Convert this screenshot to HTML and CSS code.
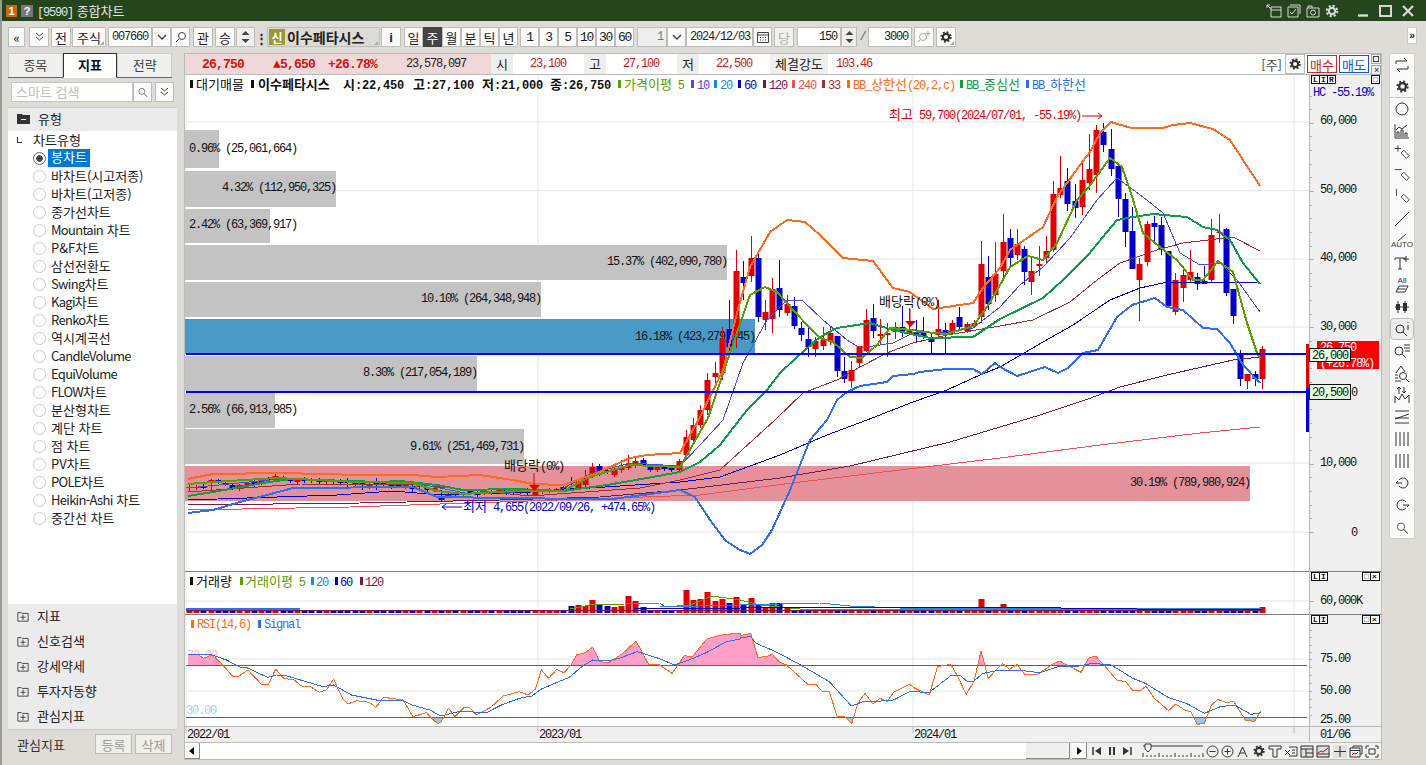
FILE: index.html
```html
<!DOCTYPE html>
<html lang="ko">
<head>
  <meta charset="UTF-8" />
  <title>[9590] 종합차트</title>
  <link rel="stylesheet" href="styles.css">
</head>
<body>
  <!-- shared icons -->
  <svg class="defs" width="0" height="0">
    <symbol id="i-gear" viewBox="0 0 20 20">
      <circle cx="10" cy="10" r="4.5" fill="none" stroke="#333" stroke-width="3"/>
      <circle cx="10" cy="10" r="6.8" fill="none" stroke="#333" stroke-width="2.6" stroke-dasharray="2.7 2.64"/>
    </symbol>
    <symbol id="i-zoom" viewBox="0 0 20 20">
      <circle cx="8" cy="9" r="5" fill="none" stroke="#333"/>
      <path d="M12 13l5 5" stroke="#333" stroke-width="1.4"/>
    </symbol>
    <symbol id="i-pencil" viewBox="0 0 20 20">
      <path d="M9 10l3-3 6 6-3 3z" fill="none" stroke="#333"/>
    </symbol>
    <symbol id="i-plus-box" viewBox="0 0 14 14">
      <path d="M1 3h4l1 1h7v9H1z" fill="none" stroke="#333"/>
      <path d="M7 5.500v6M4 8.500h6" stroke="#333"/>
    </symbol>
  </svg>

  <div class="titlebar">
    <span class="badge badge-one">1</span>
    <span class="badge badge-help">?</span>
    <span class="title-text"><span class="num">[9590]</span> 종합차트</span>
    <div class="title-icons">
      <svg width="16" height="14" viewBox="0 0 16 14"><path d="M5 3h10v10H5zM5 6h10M1 1l4 4M1 1h3M1 1v3" fill="none" stroke="#d8d8d8"/></svg>
      <svg width="14" height="14" viewBox="0 0 14 14"><path d="M3 1h10v9M1 3h10v10H1zM3 8l2 2 4-5" fill="none" stroke="#d8d8d8"/></svg>
      <svg width="14" height="14" viewBox="0 0 14 14"><path d="M1 4h12v9H1zM2 4V2h4v2" fill="none" stroke="#d8d8d8"/><circle cx="7" cy="8.500" r="2.500" fill="none" stroke="#d8d8d8"/></svg>
      <svg width="14" height="14" viewBox="0 0 20 20"><circle cx="10" cy="10" r="4.500" fill="none" stroke="#d8d8d8" stroke-width="3"/><circle cx="10" cy="10" r="7.500" fill="none" stroke="#d8d8d8" stroke-width="3" stroke-dasharray="3 2.900"/></svg>
    </div>
    <div class="win-btns">
      <svg width="12" height="12" viewBox="0 0 12 12"><path d="M1 10.500h10" stroke="#d8d8d8" stroke-width="2.400"/></svg>
      <svg width="13" height="12" viewBox="0 0 13 12"><path d="M1 1h11v10H1z" fill="none" stroke="#d8d8d8" stroke-width="2"/></svg>
      <svg width="12" height="12" viewBox="0 0 12 12"><path d="M1 1l10 10M11 1L1 11" stroke="#d8d8d8" stroke-width="2.200"/></svg>
    </div>
  </div>

  <div class="toolbar">
    <div class="btn w17">«</div>
    <div class="btn w20 ml4"><svg width="9" height="10" viewBox="0 0 9 10"><path d="M1 1l3.500 3L8 1M1 5l3.500 3L8 5" fill="none" stroke="#444"/></svg></div>
    <div class="btn w20 ml2">전</div>
    <div class="btn w34 ml1 corner">주식</div>
    <div class="field w44 ml2 num">007660</div>
    <div class="btn w19"><svg width="10" height="7" viewBox="0 0 10 7"><path d="M1 1l4 4 4-4" fill="none" stroke="#444" stroke-width="1.500"/></svg></div>
    <div class="btn w19"><svg width="12" height="12" viewBox="0 0 12 12"><circle cx="7" cy="5" r="3.500" fill="none" stroke="#444"/><path d="M4.500 7.500L1 11" stroke="#444"/></svg></div>
    <div class="btn w20 ml3">관</div>
    <div class="btn w20 ml2">승</div>
    <div class="btn w19 ml1 spin"><svg width="11" height="16" viewBox="0 0 11 16"><path d="M5.500 2l4 4h-8zM1.500 10h8l-4 4z" fill="#444"/></svg></div>
    <div class="dots ml2">⋮</div>
    <div class="combo ml2 corner"><span class="sin-mark">신</span><span class="combo-name">이수페타시스</span></div>
    <div class="btn w20 ml1 strong">i</div>
    <div class="period ml3">
      <div class="btn w19">일</div><div class="btn w19 active">주</div><div class="btn w19">월</div><div class="btn w19">분</div><div class="btn w19">틱</div><div class="btn w19">년</div>
    </div>
    <div class="period ml2 num">
      <div class="btn w19">1</div><div class="btn w19">3</div><div class="btn w19">5</div><div class="btn w19">10</div><div class="btn w19">30</div><div class="btn w19">60</div>
    </div>
    <div class="field w30 ml3 right off num">1</div>
    <div class="btn w19"><svg width="10" height="7" viewBox="0 0 10 7"><path d="M1 1l4 4 4-4" fill="none" stroke="#444" stroke-width="1.500"/></svg></div>
    <div class="field w67 num">2024/12/03</div>
    <div class="btn w19"><svg width="12" height="12" viewBox="0 0 12 12"><path d="M.5 1.500h11v10H.5zM.5 4h11M3 6.500h1M5.500 6.500h1M8 6.500h1M3 9h1M5.500 9h1M8 9h1" fill="none" stroke="#444"/></svg></div>
    <div class="btn w20 ml2 off-text">당</div>
    <div class="field w44 ml3 right num">150</div>
    <div class="btn w16 spin"><svg width="11" height="16" viewBox="0 0 11 16"><path d="M5.500 2l4 4h-8zM1.500 10h8l-4 4z" fill="#444"/></svg></div>
    <div class="slash num">/</div>
    <div class="field w44 right num">3000</div>
    <div class="btn w20 ml2"><svg width="15" height="14" viewBox="0 0 15 14"><circle cx="6" cy="7" r="3.500" fill="none" stroke="#aaa"/><path d="M3.500 9.500L1 12M11 1v5M8.500 3.500h5" stroke="#aaa"/></svg></div>
    <div class="btn w20 ml2 corner"><svg width="14" height="14"><use href="#i-gear"/></svg></div>
    <div class="more">»</div>
  </div>

  <div class="content">
    <!-- left panel -->
    <aside class="left-panel">
      <div class="tabs">
        <div class="tab">종목</div>
        <div class="tab tab-on">지표</div>
        <div class="tab">전략</div>
      </div>
      <div class="search-row">
        <input class="search-input" type="text" placeholder="스마트 검색"/>
        <div class="btn w19"><svg width="12" height="12"><use href="#i-zoom"/></svg></div>
        <div class="btn w19 ml3"><svg width="9" height="10" viewBox="0 0 9 10"><path d="M1 1l3.500 3L8 1M1 5l3.500 3L8 5" fill="none" stroke="#444"/></svg></div>
      </div>
      <div class="group-head group-open">
        <svg width="13" height="11" viewBox="0 0 13 11"><path d="M0 1h5l1 1h7v9H0z" fill="#333"/><path d="M4 6.500h5" stroke="#eee"/></svg>
        <span>유형</span>
      </div>
      <div class="tree">
        <div class="tree-root"><span class="elbow"></span>차트유형</div>
        <div class="tree-item"><span class="radio radio-on"></span><span class="sel">봉차트</span></div>
        <div class="tree-item"><span class="radio"></span><span>바차트(시고저종)</span></div>
        <div class="tree-item"><span class="radio"></span><span>바차트(고저종)</span></div>
        <div class="tree-item"><span class="radio"></span><span>종가선차트</span></div>
        <div class="tree-item"><span class="radio"></span><span><span class="lat">Mountain</span> 차트</span></div>
        <div class="tree-item"><span class="radio"></span><span>P&amp;F차트</span></div>
        <div class="tree-item"><span class="radio"></span><span>삼선전환도</span></div>
        <div class="tree-item"><span class="radio"></span><span><span class="lat">Swing</span>차트</span></div>
        <div class="tree-item"><span class="radio"></span><span><span class="lat">Kagi</span>차트</span></div>
        <div class="tree-item"><span class="radio"></span><span><span class="lat">Renko</span>차트</span></div>
        <div class="tree-item"><span class="radio"></span><span>역시계곡선</span></div>
        <div class="tree-item"><span class="radio"></span><span class="lat">CandleVolume</span></div>
        <div class="tree-item"><span class="radio"></span><span class="lat">EquiVolume</span></div>
        <div class="tree-item"><span class="radio"></span><span><span class="lat">FLOW</span>차트</span></div>
        <div class="tree-item"><span class="radio"></span><span>분산형차트</span></div>
        <div class="tree-item"><span class="radio"></span><span>계단 차트</span></div>
        <div class="tree-item"><span class="radio"></span><span>점 차트</span></div>
        <div class="tree-item"><span class="radio"></span><span>PV차트</span></div>
        <div class="tree-item"><span class="radio"></span><span><span class="lat">POLE</span>차트</span></div>
        <div class="tree-item"><span class="radio"></span><span><span class="lat">Heikin-Ashi</span> 차트</span></div>
        <div class="tree-item"><span class="radio"></span><span>중간선 차트</span></div>
      </div>
      <div class="groups">
        <div class="group-head"><svg width="12" height="12"><use href="#i-plus-box"/></svg><span>지표</span></div>
        <div class="group-head"><svg width="12" height="12"><use href="#i-plus-box"/></svg><span>신호검색</span></div>
        <div class="group-head"><svg width="12" height="12"><use href="#i-plus-box"/></svg><span>강세약세</span></div>
        <div class="group-head"><svg width="12" height="12"><use href="#i-plus-box"/></svg><span>투자자동향</span></div>
        <div class="group-head"><svg width="12" height="12"><use href="#i-plus-box"/></svg><span>관심지표</span></div>
      </div>
      <div class="panel-foot">
        <span class="foot-label">관심지표</span>
        <div class="foot-btn">등록</div>
        <div class="foot-btn">삭제</div>
      </div>
    </aside>

    <!-- chart frame -->
    <main class="chart-frame">
      <div class="quote-row">
        <div class="quote-now">
          <span class="q-price">26,750</span>
          <span class="q-up">▲5,650</span>
          <span class="q-up q-pct">+26.78%</span>
          <span class="q-vol">23,578,097</span>
        </div>
        <div class="q-label">시</div><div class="q-val w71">23,100</div>
        <div class="q-label">고</div><div class="q-val w71">27,100</div>
        <div class="q-label">저</div><div class="q-val w71">22,500</div>
        <div class="q-label w58">체결강도</div><div class="q-val q-last">103.46</div>
        <div class="q-tools">
          <span class="q-unit">[주]</span>
          <div class="btn w20"><svg width="14" height="14"><use href="#i-gear"/></svg></div>
          <div class="order order-buy">매수</div>
          <div class="order order-sell">매도</div>
          <div class="mini-col">
            <span class="mini"><i class="mini-sq"></i></span>
            <span class="mini">×</span>
          </div>
        </div>
      </div>
      <svg id="chart" class="chart" width="1196" height="667" viewBox="185 75 1196 667"></svg>
      <div class="scroll-row">
        <div class="scroll-arrow"><svg width="6" height="8" viewBox="0 0 6 8"><path d="M5 0v8L0 4z" fill="#111"/></svg></div>
        <div class="scroll-track"></div>
        <div class="scroll-thumb"></div>
        <div class="scroll-arrow ml2"><svg width="6" height="8" viewBox="0 0 6 8"><path d="M1 0v8l5-4z" fill="#111"/></svg></div>
        <div class="play-btns">
          <svg width="10" height="10" viewBox="0 0 10 10"><path d="M1 1v8" stroke="#333" stroke-width="1.500"/><path d="M9 1v8L3 5z" fill="#333"/></svg>
          <svg width="10" height="10" viewBox="0 0 10 10"><path d="M2 1h2v8H2zM6 1h2v8H6z" fill="#333"/></svg>
          <svg width="10" height="10" viewBox="0 0 10 10"><path d="M1 1v8l6-4z" fill="#333"/><path d="M9 1v8" stroke="#333" stroke-width="1.500"/></svg>
        </div>
        <svg class="slider" width="62" height="15" viewBox="0 0 62 15">
          <path d="M1 3h60M1 10v4M5 12v2M9 12v2M13 12v2M17 10v4M21 12v2M25 12v2M29 12v2M33 10v4M37 12v2M41 12v2M45 12v2M49 10v4M53 12v2M57 12v2M61 10v4" stroke="#333"/>
          <path d="M3 1h6v5l-3 3-3-3z" fill="#eee" stroke="#333"/>
        </svg>
        <div class="bottom-icons">
          <svg width="13" height="13" viewBox="0 0 13 13"><circle cx="6.500" cy="6.500" r="5.500" fill="none" stroke="#333"/><path d="M3.500 6.500h6" stroke="#333"/></svg>
          <svg width="13" height="13" viewBox="0 0 13 13"><circle cx="6.500" cy="6.500" r="5.500" fill="none" stroke="#333"/><path d="M3.500 6.500h6M6.500 3.500v6" stroke="#333"/></svg>
          <svg width="13" height="13" viewBox="0 0 13 13"><path d="M2 12L6.500 2 11 12M4 8h5" fill="none" stroke="#333"/></svg>
          <svg width="14" height="14"><use href="#i-gear"/></svg>
          <svg width="14" height="13" viewBox="0 0 14 13"><path d="M1 1h12v3H9v8H5V4H1z" fill="none" stroke="#333"/></svg>
          <svg width="14" height="13" viewBox="0 0 14 13"><path d="M5 2h8v9H5M1 5l5 5M6 5l-5 5M8 5h3M8 8h3" fill="none" stroke="#333"/></svg>
          <svg class="icon-on" width="14" height="13" viewBox="0 0 14 13"><path d="M1 1h12v11H1zM1 4h12M6 4v8M6 8h7" fill="none" stroke="#333"/></svg>
          <svg class="icon-on" width="14" height="13" viewBox="0 0 14 13"><path d="M1 1h12v11H1zM1 9h12" fill="none" stroke="#333"/><path d="M2 8l3-2 2 1 5-4" fill="none" stroke="#d00"/></svg>
          <svg class="icon-on" width="14" height="13" viewBox="0 0 14 13"><path d="M7 1v11M1 6.500h12" stroke="#333"/></svg>
          <svg width="14" height="13" viewBox="0 0 14 13"><path d="M4 3V1h9v8h-2M1 3h10v9H1zM1 5.500h10" fill="none" stroke="#333"/><path d="M3 10l2-2 2 1 2-2" fill="none" stroke="#d00"/></svg>
          <svg width="14" height="13" viewBox="0 0 14 13"><path d="M1 4V1h3M10 1h3v3M13 9v3h-3M4 12H1V9M4 4h6v5H4z" fill="none" stroke="#333"/></svg>
        </div>
      </div>
    </main>

    <!-- drawing tools -->
    <nav class="side-tools">
      <div class="tool"><svg width="18" height="16" viewBox="0 0 18 16"><path d="M3 7V4h11l-3-3M15 9v3H4l3 3" fill="none" stroke="#333"/></svg></div>
      <div class="tool tool-last"><svg width="15" height="15"><use href="#i-gear"/></svg></div>
      <div class="tool"><svg width="14" height="14" viewBox="0 0 14 14"><circle cx="7" cy="7" r="6" fill="none" stroke="#333"/></svg></div>
      <div class="tool"><svg width="16" height="16" viewBox="0 0 16 16"><path d="M1 1v14h14M3 14V9h2v5M7 14V7h2v7M11 14v-4h2v4M2 7l3-3 3 2 5-4" fill="none" stroke="#333"/></svg></div>
      <div class="tool"><svg width="18" height="18" viewBox="0 0 20 20"><path d="M2 5h7M5.500 1.500v7" stroke="#333"/><use href="#i-pencil"/></svg></div>
      <div class="tool"><svg width="18" height="18" viewBox="0 0 20 20"><path d="M2 4h8" stroke="#333"/><use href="#i-pencil"/></svg></div>
      <div class="tool"><svg width="18" height="18" viewBox="0 0 20 20"><path d="M4 1v8" stroke="#333"/><use href="#i-pencil"/></svg></div>
      <div class="tool"><svg width="16" height="16" viewBox="0 0 16 16"><path d="M1 15L15 1" stroke="#333"/></svg></div>
      <div class="tool tool-auto"><svg width="14" height="7" viewBox="0 0 14 7"><path d="M3 7l8-7" stroke="#333"/></svg><span>AUTO</span></div>
      <div class="tool"><svg width="18" height="16" viewBox="0 0 18 16"><path d="M2 5V3h10v2M7 3v11M5 14h4M13 1v6M10 4h6" fill="none" stroke="#333"/></svg></div>
      <div class="tool tool-auto"><span>All</span><svg width="14" height="8" viewBox="0 0 14 8"><path d="M4 1h9L10 7H1zM2.500 4h8" fill="none" stroke="#333"/></svg></div>
      <div class="tool"><svg width="14" height="14" viewBox="0 0 14 14"><path d="M3 1v12M10 1v12M0 7h14" stroke="#333"/><path d="M1 4h4v6H1zM8 3h4v8H8z" fill="#333"/></svg></div>
      <div class="tool tool-on"><svg width="18" height="16" viewBox="0 0 18 16"><circle cx="7" cy="8" r="4" fill="none" stroke="#333"/><path d="M10 11l4 4M15 1v1M15 4v5" stroke="#333"/></svg></div>
      <div class="tool"><svg width="18" height="16" viewBox="0 0 18 16"><circle cx="6" cy="8" r="4" fill="none" stroke="#333"/><path d="M9 11l4 4M11 2h6M11 5h6M12 8h5" stroke="#333"/></svg></div>
      <div class="tool"><svg width="18" height="18" viewBox="0 0 18 18"><circle cx="10" cy="12" r="3.500" fill="none" stroke="#333"/><path d="M13 15l3 3M3 9l5-7 4 6M2 11h3M2 14h3M2 17h6" fill="none" stroke="#333"/></svg></div>
      <div class="tool"><svg width="16" height="18" viewBox="0 0 16 18"><path d="M1 17V10l4 4 3-6 3 5 4-4v8M5 1v7M3 3l2-2 2 2M10 1v6M8 5l2 2 2-2" fill="none" stroke="#333"/></svg></div>
      <div class="tool"><svg width="16" height="14" viewBox="0 0 16 14"><path d="M1 1h14M1 13h14M1 9l14-5M1 8h14" fill="none" stroke="#333"/></svg></div>
      <div class="tool"><svg width="14" height="16" viewBox="0 0 14 16"><path d="M1 1v14M5 1v14M9 1v14M13 1v14" stroke="#333"/></svg></div>
      <div class="tool"><svg width="14" height="16" viewBox="0 0 14 16"><path d="M1 1v14M5 1v14M9 1v14M13 1v14" stroke="#333"/></svg></div>
      <div class="tool"><svg width="15" height="14" viewBox="0 0 15 14"><path d="M4 4a5 5 0 1 1 0 6M1 7h6M1 7l2-2" fill="none" stroke="#333"/></svg></div>
      <div class="tool"><svg width="15" height="14" viewBox="0 0 15 14"><path d="M11 4a5 5 0 1 0 0 6M8 7h6M14 7l-2 2" fill="none" stroke="#333"/></svg></div>
      <div class="tool"><svg width="15" height="15"><use href="#i-zoom"/></svg></div>
    </nav>
  </div>

  <script src="chart.js"></script>
</body>
</html>
```

FILE: styles.css
```css
body {
  font-family: "Noto Sans CJK KR", "Liberation Sans", sans-serif;
  font-size: 13px;
  color: #222;
  margin: 0;
  width: 1426px;
  height: 765px;
  overflow: hidden;
  background-color: #dddcd7;
  border-left: 2px solid #9a9a96;
  box-sizing: border-box;
}

.defs {
  position: absolute;
}

.num {
  font-family: "Liberation Mono", monospace;
  font-size: 12px;
  letter-spacing: -1.2px;
}

/* Title bar */
.titlebar {
  height: 21px;
  margin-left: -2px;
  padding-left: 6px;
  display: flex;
  align-items: center;
  background-color: #25451c;
  color: #e4e4e4;
}

.badge {
  width: 11px;
  height: 12px;
  margin-right: 4px;
  display: flex;
  align-items: center;
  justify-content: center;
  font: 700 11px "Liberation Sans", sans-serif;
  color: #fff;
}

.badge-one {
  background-color: #c8690f;
}

.badge-help {
  width: 12px;
  background-color: #777;
}

.title-text {
  font-size: 13px;
}

.title-icons {
  margin-left: auto;
  display: flex;
  align-items: center;
  gap: 5px;
}

.win-btns {
  margin-left: 18px;
  margin-right: 12px;
  display: flex;
  align-items: center;
  gap: 10px;
}

/* Toolbar */
.toolbar {
  height: 20px;
  padding: 6px 0 6px 6px;
  display: flex;
  align-items: stretch;
}

.btn {
  position: relative;
  box-sizing: border-box;
  height: 20px;
  flex: none;
  display: flex;
  align-items: center;
  justify-content: center;
  border: 1px solid #bcbcb8;
  background-color: #fbfbfb;
  font-size: 13px;
}

.field {
  box-sizing: border-box;
  height: 20px;
  padding: 0 3px;
  display: flex;
  align-items: center;
  flex: none;
  border: 1px solid #bcbcb8;
  background-color: #fff;
  font-size: 12px;
}

.right {
  justify-content: flex-end;
}

.off {
  background-color: #eee;
  color: #777;
}

.off-text {
  color: #aaa;
  background-color: #f2f2f0;
}

.w16 { width: 16px; }
.w17 { width: 17px; }
.w19 { width: 19px; }
.w20 { width: 20px; }
.w30 { width: 30px; }
.w34 { width: 34px; }
.w44 { width: 44px; }
.w67 { width: 67px; }

.ml1 { margin-left: 1px; }
.ml2 { margin-left: 2px; }
.ml3 { margin-left: 3px; }
.ml4 { margin-left: 4px; }

.corner::after {
  content: "";
  position: absolute;
  right: 1px;
  bottom: 1px;
  border: 2px solid transparent;
  border-right-color: #aaa;
  border-bottom-color: #aaa;
}

.spin {
  background-color: #efefef;
}

.strong {
  font: 700 13px "Liberation Sans", sans-serif;
}

.dots {
  width: 8px;
  display: flex;
  align-items: center;
  justify-content: center;
  font-weight: 700;
}

.combo {
  position: relative;
  width: 113px;
  display: flex;
  align-items: center;
  box-sizing: border-box;
  border: 1px solid #bcbcb8;
  background-color: #dcdbd5;
}

.sin-mark {
  width: 16px;
  height: 16px;
  margin-left: 1px;
  display: flex;
  align-items: center;
  justify-content: center;
  background-color: #9c9633;
  color: #fff;
  font-size: 12px;
  font-weight: 700;
}

.combo-name {
  margin-left: 2px;
  font-weight: 700;
  font-size: 14px;
  line-height: 18px;
}

.period {
  display: flex;
}

.period .num {
  font-size: 12px;
}

.active {
  background-color: #444;
  border-color: #444;
  color: #fff;
}

.slash {
  width: 11px;
  display: flex;
  align-items: center;
  justify-content: center;
  color: #666;
}

.more {
  margin-left: 451px;
  width: 8px;
  height: 15px;
  display: flex;
  align-items: center;
  justify-content: center;
  background-color: #fff;
  border: 1px solid #ccc;
  font: 700 10px "Liberation Sans", sans-serif;
}

/* Page body */
.content {
  display: flex;
  align-items: flex-start;
  padding-left: 6px;
}

/* Left panel */
.left-panel {
  width: 169px;
  height: 705px;
  flex: none;
  display: flex;
  flex-direction: column;
}

.tabs {
  height: 24px;
  display: flex;
  border-bottom: 1px solid #666;
  margin-right: 5px;
}

.tab {
  flex: 1;
  padding-bottom: 2px;
  display: flex;
  align-items: center;
  justify-content: center;
  background-color: #f0f0ee;
  border: 1px solid #ccc;
  border-bottom: none;
  color: #444;
}

.tab-on {
  background-color: #fff;
  border: 1px solid #333;
  border-bottom: 1px solid #fff;
  margin-bottom: -1px;
  color: #111;
  font-weight: 700;
}

.search-row {
  height: 25px;
  padding-left: 3px;
  padding-top: 4px;
  display: flex;
  align-items: flex-start;
}

.search-input {
  width: 122px;
  height: 20px;
  box-sizing: border-box;
  padding: 0 4px 2px;
  border: 1px solid #c4c4c0;
  font: 13px "Noto Sans CJK KR", sans-serif;
  outline: none;
}

.search-input::placeholder {
  color: #c0c0c0;
}

.group-head {
  height: 25px;
  padding-left: 9px;
  padding-bottom: 2px;
  display: flex;
  align-items: center;
  gap: 8px;
  background-color: #ebebeb;
  box-sizing: border-box;
}

.group-open {
  height: 24px;
  border-top: 1px solid #c9c9c5;
}

.tree {
  flex: 1;
  background-color: #fff;
}

.tree-root {
  height: 18px;
  padding-left: 25px;
  padding-bottom: 2px;
  box-sizing: border-box;
  position: relative;
  display: flex;
  align-items: center;
}

.elbow {
  position: absolute;
  left: 9px;
  top: 6px;
  width: 4px;
  height: 5px;
  border-left: 1px solid #333;
  border-bottom: 1px solid #333;
}

.tree-item {
  height: 18px;
  padding-left: 25px;
  display: flex;
  align-items: center;
  gap: 5px;
}

.tree-item span:last-child {
  padding-bottom: 2px;
}

.lat {
  letter-spacing: -.7px;
}

.radio {
  width: 11px;
  height: 11px;
  flex: none;
  border: 1px solid #ccc;
  border-radius: 50%;
  background-color: #fff;
}

.radio-on {
  border-color: #666;
  background: radial-gradient(circle, #444 0 3px, #fff 3.5px);
}

.tree-item .sel {
  background-color: #0078d7;
  color: #fff;
  padding: 0 3px 1px;
  margin-left: -3px;
  line-height: 16px;
}

.panel-foot {
  height: 28px;
  padding-left: 9px;
  padding-right: 5px;
  display: flex;
  align-items: center;
  border-top: 1px solid #c9c9c5;
}

.foot-label {
  flex: 1;
  color: #333;
}

.foot-btn {
  width: 37px;
  height: 20px;
  margin-left: 3px;
  box-sizing: border-box;
  display: flex;
  align-items: center;
  justify-content: center;
  border: 1px solid #bdbdb8;
  background-color: #efefec;
  color: #999;
}

/* Chart frame */
.chart-frame {
  width: 1198px;
  margin-left: 7px;
  flex: none;
  box-sizing: border-box;
  border: 1px solid #bcbcb8;
  background-color: #fff;
}

.quote-row {
  height: 20px;
  display: flex;
  align-items: center;
  border-bottom: 1px solid #bcbcb8;
  font: 12px "Liberation Mono", monospace;
  letter-spacing: -1.2px;
}

.quote-now {
  width: 306px;
  height: 100%;
  flex: none;
  position: relative;
  display: flex;
  align-items: center;
  background-color: #f0d8d8;
}

.q-price {
  margin-left: 17px;
  width: 71px;
  font-weight: 700;
  font-size: 13px;
  letter-spacing: -0.8px;
  color: #d81010;
}

.q-up {
  font-weight: 700;
  font-size: 13px;
  letter-spacing: -0.8px;
  color: #d81010;
}

.q-pct {
  margin-left: 13px;
}

.q-vol {
  margin-left: 29px;
}

.q-label {
  width: 22px;
  height: 100%;
  flex: none;
  padding-bottom: 2px;
  box-sizing: border-box;
  display: flex;
  align-items: center;
  justify-content: center;
  background-color: #eee;
  font: 13px "Noto Sans CJK KR", sans-serif;
  letter-spacing: 0;
}

.q-label.w58 {
  width: 58px;
}

.q-val {
  height: 100%;
  flex: none;
  padding-left: 17px;
  box-sizing: border-box;
  display: flex;
  align-items: center;
  color: #c81818;
}

.w71 {
  width: 71px;
}

.q-last {
  padding-left: 8px;
}

.q-tools {
  margin-left: auto;
  display: flex;
  align-items: center;
  height: 100%;
}

.q-unit {
  margin-right: 3px;
  font: 13px "Noto Sans CJK KR", sans-serif;
  letter-spacing: 0;
  color: #444;
}

.order {
  width: 30px;
  height: 18px;
  margin-left: 2px;
  box-sizing: border-box;
  display: flex;
  align-items: center;
  justify-content: center;
  font: 13px "Noto Sans CJK KR", sans-serif;
  letter-spacing: 0;
}

.order-buy {
  color: #c82828;
  border: 1px solid #c82828;
}

.order-sell {
  color: #1a50d8;
  border: 1px solid #1a50d8;
}

.mini-col {
  margin-left: 2px;
  display: flex;
  flex-direction: column;
  gap: 1px;
}

.mini {
  width: 8px;
  height: 8px;
  display: flex;
  align-items: center;
  justify-content: center;
  border: 1px solid #aaa;
  background-color: #eee;
  font: 9px "Liberation Sans", sans-serif;
}

.mini-sq {
  width: 4px;
  height: 4px;
  border: 1px solid #444;
}

.chart {
  display: block;
}

.chart polyline {
  shape-rendering: crispEdges;
}

/* Text drawn in the chart */
.t {
  font: 12px "Liberation Mono", monospace;
  letter-spacing: -1.2px;
  fill: #111;
}

.t .ko {
  font: 13px "Noto Sans CJK KR", sans-serif;
  letter-spacing: 0;
}

.t.b {
  font-weight: 700;
  letter-spacing: -.2px;
}

.t.b .ko {
  font-weight: 700;
}

.t-small {
  font: 700 8px "Liberation Mono", monospace;
  fill: #111;
}

/* Scroll and replay row */
.scroll-row {
  height: 16px;
  display: flex;
  align-items: stretch;
  background-color: #f0f0f0;
  border-top: 1px solid #bcbcb8;
}

.scroll-arrow {
  width: 15px;
  flex: none;
  display: flex;
  align-items: center;
  justify-content: center;
  background-color: #fff;
  border-right: 1px solid #888;
  border-bottom: 1px solid #888;
  box-sizing: border-box;
}

.scroll-track {
  flex: 1;
  background-color: #fff;
  background-image: radial-gradient(#d8d8d8 .5px, transparent .6px);
  background-size: 2px 2px;
}

.scroll-thumb {
  width: 44px;
  flex: none;
  background-color: #f0f0f0;
  border-right: 1px solid #888;
  border-bottom: 1px solid #888;
  box-sizing: border-box;
}

.play-btns {
  width: 52px;
  flex: none;
  padding-left: 5px;
  box-sizing: border-box;
  display: flex;
  align-items: center;
  gap: 5px;
}

.slider {
  flex: none;
  margin: 0 2px 0 3px;
}

.bottom-icons {
  width: 175px;
  flex: none;
  display: flex;
  align-items: center;
  justify-content: space-between;
  padding-right: 2px;
  box-sizing: border-box;
}

.icon-on {
  background-color: #e0e0e0;
}

/* Drawing tools */
.side-tools {
  width: 26px;
  height: 486px;
  margin-left: 7px;
  flex: none;
  box-sizing: border-box;
  border: 1px solid #d0d0cc;
  background-color: #fbfbfb;
  display: flex;
  flex-direction: column;
  align-items: center;
}

.tool {
  width: 24px;
  height: 22px;
  flex: none;
  display: flex;
  flex-direction: column;
  align-items: center;
  justify-content: center;
  box-sizing: border-box;
}

.tool-last {
  border-bottom: 1px solid #c8c8c4;
}

.tool-auto {
  font: 400 8px "Liberation Sans", sans-serif;
  line-height: 8px;
  color: #333;
}

.tool-on {
  background-color: #eee;
  border: 1px solid #bbb;
  border-radius: 4px;
}
```

FILE: chart.js
```js
// All chart coordinates are page pixels, the svg viewBox lines up with the page.
const svg = document.getElementById('chart');
let out = '';

const RED = '#e00000';
const BLUE = '#0000c8';
const PLOT_LEFT = 186;
const PLOT_RIGHT = 1309;
const AXIS_RIGHT = 1381;
const priceY = (p) => 532 - p * 0.00682;

function rect(x, y, w, h, fill) {
  out += `<rect x="${x}" y="${y}" width="${w}" height="${h}" fill="${fill}"/>`;
}

function line(x1, y1, x2, y2, stroke, width = 1) {
  out += `<line x1="${x1}" y1="${y1}" x2="${x2}" y2="${y2}" stroke="${stroke}" stroke-width="${width}"/>`;
}

function poly(points, stroke, width) {
  const d = points.map((p) => p.join(',')).join(' ');
  out += `<polyline points="${d}" fill="none" stroke="${stroke}" stroke-width="${width}" stroke-linejoin="round"/>`;
}

// hangul goes in its own tspan, latin and digits stay in the narrow mono font
function text(x, y, str, opts = {}) {
  const parts = str.split(/([가-힣]+)/).filter(Boolean).map((s) =>
    /[가-힣]/.test(s) ? `<tspan class="ko">${s}</tspan>` : s
  ).join('');
  const anchor = opts.end ? ' text-anchor="end"' : '';
  const fill = opts.fill ? ` style="fill:${opts.fill}"` : '';
  out += `<text x="${x}" y="${y}" class="t${opts.bold ? ' b' : ''}"${anchor}${fill}>${parts}</text>`;
}

function box(x, y, w, h, label) {
  out += `<rect x="${x + .5}" y="${y + .5}" width="${w}" height="${h}" fill="#fff" stroke="#111"/>`;
  out += `<text x="${x + 2}" y="${y + h - 1}" class="t-small">${label}</text>`;
}

/* ---------- panes and grid ---------- */
rect(PLOT_RIGHT, 75, AXIS_RIGHT - PLOT_RIGHT, 667, '#f0f0f0');
rect(185, 727, AXIS_RIGHT - 185, 15, '#f0f0f0');

[122, 190.5, 259, 327, 395, 463, 532, 601, 659, 691].forEach((y) => line(PLOT_LEFT, y, PLOT_RIGHT, y, '#e6e6e6'));
[186, 538, 913, 1294].forEach((x) => {
  line(x, 75, x, 727, '#e6e6e6');
  line(x, 727, x, 733, '#bbb');
});

/* ---------- volume profile ---------- */
const profile = [
  [130, 38, 219, '#c3c3c3', '0.96% (25,061,664)', 152, true],
  [171, 36, 336, '#c3c3c3', '4.32% (112,950,325)', 191],
  [209, 34, 270, '#c3c3c3', '2.42% (63,369,917)', 228, true],
  [245, 35, 727, '#c3c3c3', '15.37% (402,090,780)', 265],
  [282, 35, 541, '#c3c3c3', '10.10% (264,348,948)', 302],
  [319, 35, 755, '#4a9ac8', '16.18% (423,279,745)', 340],
  [356, 35, 477, '#c3c3c3', '8.30% (217,054,189)', 376],
  [393, 35, 275, '#c3c3c3', '2.56% (66,913,985)', 413, true],
  [429, 35, 524, '#c3c3c3', '9.61% (251,469,731)', 450],
  [466, 35, 1250, '#e5919b', '30.19% (789,980,924)', 486],
];
profile.forEach(([y, h, right, color]) => rect(PLOT_LEFT - 1, y, right - PLOT_LEFT + 1, h, color));
profile.forEach(([, , right, , label, base, atLeft]) => {
  if (atLeft) text(189, base, label);
  else text(right, base, label, { end: true });
});

/* ---------- candles: red?, body top, body bottom, high, low ---------- */
const candles = [
  [1,487,488,483,492],[1,487,488,485,490],[0,486,488,484,489],[1,480,483,479,491],[0,480,483,479,484],[0,483,484,482,486],
  [0,485,489,484,490],[1,485,489,484,491],[1,483,485,482,487],[0,481,484,480,487],[1,480,483,479,485],[0,478,480,477,482],
  [1,476,480,473,481],[0,477,479,476,481],[0,479,481,478,483],[1,480,482,479,484],[0,478,481,477,483],[0,479,481,478,483],
  [0,479,482,478,484],[1,481,482,480,484],[0,480,482,479,484],[0,480,483,479,485],[0,482,483,478,489],[0,482,484,481,486],
  [0,483,485,482,490],[1,484,487,483,489],[0,481,484,478,490],[0,482,485,481,487],[0,484,486,483,489],[0,484,486,483,488],
  [1,484,487,483,489],[0,486,489,482,492],[1,484,487,483,489],[0,488,490,487,492],[1,488,490,487,492],[0,496,500,490,502],
  [1,494,496,492,498],[0,492,495,491,497],[1,493,495,492,497],[0,491,493,490,495],[0,492,495,491,497],[1,491,493,490,495],
  [0,491,493,490,495],[1,490,492,489,494],[0,490,493,489,495],[0,490,492,489,494],[0,490,492,489,494],[0,490,493,488,495],
  [1,491,495,489,496],[1,490,492,489,494],[1,490,491,488,493],[1,489,490,488,492],[0,487,489,486,491],[0,488,490,477,491],
  [1,482,488,479,490],[1,478,485,470,487],[1,467,475,463,478],[0,466,472,464,476],[0,470,472,468,474],[1,470,475,468,477],
  [1,467,470,460,473],[1,464,468,455,470],[1,461,465,458,468],[0,460,465,458,467],[0,466,470,464,472],[1,467,470,465,472],
  [0,467,469,465,471],[0,467,470,465,472],[1,461,470,459,472],[1,437,455,430,458],[1,425,440,418,445],
  [1,410,425,405,428],[1,380,410,373,415],[1,373,377,362,383],[1,339,373,327,380],[0,329,347,300,353],[1,271,335,250,348],
  [0,277,283,261,300],[1,258,276,236,282],[0,258,317,253,322],[1,312,320,300,330],[1,289,319,278,333],[0,288,310,260,317],
  [1,304,313,295,316],[0,306,326,297,329],[0,328,335,322,341],[0,339,347,327,357],[1,341,349,337,357],[1,340,346,327,350],
  [1,333,341,327,345],[0,336,371,336,377],[0,371,379,357,383],[1,370,381,361,388],[1,346,363,346,367],[1,320,351,309,352],
  [0,318,331,304,338],[1,334,336,319,344],[1,333,335,323,357],[1,327,332,322,339],[0,327,331,306,337],[1,329,333,308,335],
  [0,332,336,320,343],[0,333,337,317,339],[0,337,342,333,353],[1,329,335,300,337],[0,330,334,323,353],[1,323,332,320,335],
  [0,317,327,307,330],[1,324,331,322,333],[1,323,326,320,328],[1,264,317,241,323],[0,277,304,256,310],[1,274,295,242,302],
  [1,242,271,214,277],[0,238,258,229,267],[1,244,255,229,260],[0,249,272,246,285],[1,271,282,257,295],[1,264,266,246,276],
  [1,251,258,236,263],[1,194,250,181,252],[1,188,195,156,198],[0,181,204,168,211],[0,201,208,184,218],[1,180,207,162,215],
  [1,169,183,134,190],[1,130,175,125,193],[0,132,145,123,152],[0,149,169,129,176],[0,166,199,166,217],[0,199,232,193,247],
  [0,231,269,207,269],[1,264,280,258,321],[1,224,262,221,266],[0,223,227,216,243],[0,225,249,217,255],[0,251,306,251,308],
  [1,280,312,273,315],[1,275,288,266,302],[1,272,280,250,283],[0,277,284,273,290],[0,281,284,266,283],[1,235,280,219,283],
  [1,232,233,214,243],[0,229,293,228,296],[0,289,316,289,324],[0,354,379,350,386],[1,374,381,374,389],[0,374,379,371,386],
  [1,349,379,346,389],
];
const barX = (i) => Math.round(189 + i * 7.2);

candles.forEach(([up, top, bottom, high, low], i) => {
  const x = barX(i);
  const color = up ? RED : BLUE;
  line(x + .5, high, x + .5, low, color);
  rect(x - 2.5, top, 6, Math.max(bottom - top, 1), color);
});

/* ---------- moving averages and bollinger ---------- */
poly([[188,510],[350,507],[500,502],[700,495],[800,482],[900,470],[1000,458],[1100,445],[1200,433],[1260,427]], '#f05050', 1);
poly([[188,505],[360,503],[500,500],[600,497],[680,490],[780,478],[850,466],[950,442],[1040,415],[1088,399],[1120,387],[1167,375],[1233,360],[1260,357]], '#7a1a4a', 1);
poly([[188,500],[337,495],[393,491],[440,495],[530,492],[680,482],[720,477],[780,455],[827,435],[867,420],[913,402],[947,390],[980,375],[1000,367],[1043,342],[1073,325],[1110,300],[1140,288],[1163,283],[1200,282],[1260,282]], '#0000d0', 1);
poly([[188,492],[300,484],[420,485],[530,496],[640,488],[680,480],[720,470],[775,420],[803,393],[837,380],[860,367],[887,353],[913,343],[947,335],[1000,326],[1033,320],[1070,302],[1097,280],[1120,263],[1157,250],[1183,243],[1233,237],[1260,251]], '#a03030', 1);
poly([[188,488],[280,479],[420,484],[470,494],[560,490],[590,474],[630,463],[680,466],[700,445],[723,420],[743,363],[767,320],[787,300],[802,300],[823,320],[847,340],[860,348],[893,343],[913,333],[947,332],[973,328],[1000,307],[1020,285],[1043,267],[1070,238],[1097,200],[1117,178],[1143,197],[1163,213],[1180,253],[1200,265],[1220,263],[1237,280],[1260,312]], '#4a4ae8', 1);

poly([[188,513],[213,510],[240,502],[267,495],[293,488],[413,487],[437,497],[580,499],[613,499],[680,490],[695,497],[710,520],[725,540],[738,549],[750,554],[762,545],[772,530],[790,490],[810,440],[827,420],[837,400],[847,392],[860,386],[887,382],[893,376],[913,374],[920,372],[947,369],[973,369],[982,374],[995,363],[1000,367],[1017,376],[1045,367],[1058,373],[1068,368],[1083,353],[1098,350],[1117,317],[1132,305],[1155,298],[1167,307],[1183,310],[1203,328],[1217,329],[1230,343],[1243,365],[1260,383]], '#2f6ff0', 2);
poly([[188,496],[213,492],[263,483],[290,479],[380,482],[400,481],[437,485],[463,490],[513,489],[563,491],[607,485],[647,478],[680,472],[700,462],[720,445],[747,410],[767,390],[780,373],[797,357],[820,337],[837,328],[870,323],[893,330],[930,338],[973,337],[1000,319],[1043,298],[1063,280],[1088,255],[1117,220],[1133,217],[1153,214],[1187,217],[1203,227],[1217,230],[1230,240],[1243,263],[1260,284]], '#0f9d45', 2);
poly([[188,484],[213,482],[277,478],[357,482],[413,483],[437,491],[463,494],[513,491],[563,491],[590,477],[630,465],[680,467],[708,418],[730,353],[750,295],[765,287],[777,292],[793,310],[810,328],[820,338],[833,342],[850,357],[862,358],[877,345],[890,328],[913,330],[933,333],[947,334],[973,326],[987,307],[1000,285],[1010,267],[1028,256],[1043,260],[1057,243],[1077,200],[1088,188],[1110,158],[1122,167],[1130,190],[1143,233],[1160,247],[1177,260],[1193,280],[1203,280],[1218,261],[1233,272],[1247,323],[1257,353],[1260,358]], '#5aa000', 2);
poly([[188,479],[213,474],[280,473],[363,475],[413,475],[437,477],[480,475],[513,480],[533,484],[563,485],[597,473],[630,458],[647,455],[680,453],[700,417],[723,370],[737,313],[750,267],[770,232],[787,220],[805,222],[820,235],[843,258],[873,261],[893,288],[910,292],[933,309],[973,303],[983,288],[1000,268],[1010,250],[1043,227],[1057,197],[1080,165],[1090,152],[1100,133],[1111,122],[1117,124],[1132,128],[1163,128],[1173,125],[1190,123],[1213,129],[1230,140],[1243,160],[1260,186]], '#ff6a20', 2);

/* ---------- price lines ---------- */
line(PLOT_LEFT, 354, PLOT_RIGHT, 354, '#0000ff', 2);
line(PLOT_LEFT, 392, PLOT_RIGHT, 392, '#0000ff', 2);

/* ---------- annotations ---------- */
text(889, 119, '최고 59,700(2024/07/01, -55.19%)', { fill: '#e00000' });
line(1082, 116, 1102, 116, '#e00000');
out += '<path d="M1098 113l4 3-4 3" fill="none" stroke="#e00000"/>';
text(463, 511, '최저 4,655(2022/09/26, +474.65%)', { fill: '#0000d8' });
line(442, 507, 462, 507, '#0000d8');
out += '<path d="M446 504l-4 3 4 3" fill="none" stroke="#0000d8"/>';

[[504, 470, 534], [879, 306, 910]].forEach(([x, y, mid]) => {
  text(x, y, '배당락(0%)');
  line(mid, y + 3, mid, y + 16, '#e00000');
  out += `<path d="M${mid - 5} ${y + 15}h11l-5.500 6z" fill="#e00000"/>`;
});

/* ---------- legends ---------- */
function mark(x, y, color) {
  rect(x, y - 4, 3, 8, color);
}

mark(190, 84, '#111');
text(196, 89, '대기매물');
mark(251, 84, '#111');
text(258, 89, '이수페타시스', { bold: true });
[[343, '시:22,450'], [413, '고:27,100'], [482, '저:21,000'], [550, '종:26,750']].forEach(([x, s]) => text(x, 89, s, { bold: true }));
[
  [618, '가격이평 5', '#5aa000'], [691, '10', '#4a4ae8'], [714, '20', '#1a8ae0'], [738, '60', '#0000c8'],
  [763, '120', '#7a1a4a'], [792, '240', '#f05050'], [822, '33', '#a03030'], [847, 'BB_상한선(20,2,c)', '#ff6a20'],
  [960, 'BB_중심선', '#0f9d45'], [1026, 'BB_하한선', '#2f6ff0'],
].forEach(([x, s, color]) => {
  mark(x, 84, color);
  text(x + 6, 89, s, { fill: color });
});

mark(190, 581, '#111');
text(196, 586, '거래량');
[[240, '거래이평 5', '#5aa000'], [311, '20', '#1a8ae0'], [335, '60', '#0000c8'], [360, '120', '#7a1a4a']].forEach(([x, s, color]) => {
  mark(x, 581, color);
  text(x + 5, 586, s, { fill: color });
});

mark(191, 624, '#ff6a20');
text(197, 628, 'RSI(14,6)', { fill: '#ff6a20' });
mark(258, 624, '#2f6ff0');
text(264, 628, 'Signal', { fill: '#2f6ff0' });

/* ---------- volume ---------- */
const volumeByX = {
  570: 7, 577: 8, 584: 7, 591: 13, 599: 9, 606: 7, 613: 6, 620: 7, 628: 17, 635: 12, 642: 6,
  685: 23, 692: 13, 700: 14, 707: 21, 714: 12, 721: 14, 728: 10, 735: 16, 743: 9, 750: 15, 757: 9, 764: 5,
  772: 10, 779: 10, 786: 5, 937: 6, 981: 14, 1002: 9, 1052: 6, 1081: 5, 1262: 6,
};
const volumes = candles.map(() => 3);
Object.entries(volumeByX).forEach(([x, h]) => {
  volumes[Math.round((x - 189) / 7.2)] = h;
});
candles.forEach(([up], i) => rect(barX(i) - 2.5, 613 - volumes[i], 6, volumes[i], up ? RED : BLUE));
poly([[186,609],[300,609]], '#2f6ff0', 2);
poly([[186,610],[1262,610]], '#7a1a4a', 1);
poly([[570,609],[590,605],[660,603],[665,607],[690,605],[712,596],[740,600],[760,605],[800,609],[1262,610]], '#5aa000', 1);
poly([[660,607],[740,605],[820,603],[850,606],[900,608],[1262,609]], '#1a8ae0', 1);
poly([[634,608],[740,608],[850,607],[1060,607],[1061,608],[1136,608],[1137,609],[1262,609]], '#0000c8', 1);

/* ---------- RSI ---------- */
const a = (x, y) => [180 + x / 2.8, 570 + y / 3];
const b = (x, y) => [740 + x / 2.8, 570 + y / 3];
const rsi = [
  a(22,252),a(50,252),a(65,265),a(90,255),a(120,285),a(148,320),a(165,318),a(190,300),a(230,345),a(248,342),a(268,297),a(290,325),a(320,330),a(340,348),a(365,350),a(390,367),a(410,360),a(430,328),a(455,385),a(470,402),a(495,392),a(530,397),a(548,412),a(570,382),a(625,390),a(652,440),a(690,428),a(705,445),a(720,460),a(730,458),a(752,415),a(770,440),a(795,413),a(810,412),a(830,435),a(870,412),a(905,378),a(950,365),a(975,375),a(995,357),a(1012,300),a(1032,325),a(1055,298),a(1075,308),a(1095,285),a(1110,255),a(1135,248),a(1155,232),a(1175,275),a(1200,278),a(1240,250),a(1277,213),a(1312,283),a(1340,283),a(1378,310),a(1412,257),a(1435,260),a(1475,207),a(1510,196),a(1555,190),a(1568,190),
  b(0,197),b(30,190),b(50,262),b(75,260),b(90,253),b(110,275),b(130,285),b(190,343),b(212,343),b(230,363),b(250,365),b(272,440),b(290,438),b(313,460),b(330,400),b(350,370),b(372,402),b(392,385),b(412,395),b(430,367),b(475,343),b(490,355),b(530,375),b(553,290),b(590,283),b(610,320),b(633,373),b(655,335),b(675,243),b(695,325),b(735,280),b(755,298),b(775,283),b(797,313),b(835,312),b(875,283),b(895,273),b(915,285),b(955,307),b(975,265),b(995,258),b(1015,280),b(1055,330),b(1080,335),b(1100,362),b(1120,362),b(1137,348),b(1160,385),b(1200,422),b(1220,402),b(1245,420),b(1262,425),b(1280,463),b(1300,460),b(1320,405),b(1338,388),b(1362,398),b(1382,394),b(1415,450),b(1440,455),b(1458,423),
];
const signal = [
  a(22,252),a(90,255),a(130,270),a(170,292),a(185,292),a(245,322),a(270,315),a(300,318),a(400,350),a(430,345),a(480,375),a(550,390),a(620,390),a(650,405),a(700,420),a(730,438),a(780,425),a(860,427),a(900,405),a(950,385),a(985,378),a(1010,358),a(1060,335),a(1090,322),a(1125,290),a(1155,270),a(1200,272),a(1230,265),a(1280,245),a(1340,265),a(1385,285),a(1420,272),a(1470,250),a(1530,215),a(1568,207),
  b(0,203),b(30,200),b(45,220),b(100,245),b(170,285),b(250,335),b(312,408),b(345,395),b(395,393),b(430,390),b(475,365),b(530,367),b(590,317),b(615,315),b(635,333),b(655,333),b(680,310),b(730,300),b(800,303),b(840,308),b(895,288),b(950,288),b(985,280),b(1040,285),b(1100,325),b(1135,340),b(1200,383),b(1250,400),b(1300,430),b(1345,410),b(1385,405),b(1430,433),b(1458,428),
];

text(187, 659, '70.00', { fill: '#f4b8d8' });
text(186, 714, '30.00', { fill: '#a8d0f8' });

const fillShape = (level) => {
  const first = rsi[0][0];
  const last = rsi[rsi.length - 1][0];
  return [[first, level], ...rsi, [last, level]].map((p) => p.join(',')).join(' ');
};
out += `<clipPath id="over70"><rect x="186" y="615" width="1120" height="50"/></clipPath>`;
out += `<clipPath id="under30"><rect x="186" y="717" width="1120" height="10"/></clipPath>`;
out += `<polygon points="${fillShape(665)}" fill="#ff9fc8" clip-path="url(#over70)"/>`;
out += `<polygon points="${fillShape(717)}" fill="#90c8f0" clip-path="url(#under30)"/>`;

line(PLOT_LEFT, 665.5, 1307, 665.5, '#f000d8');
line(PLOT_LEFT, 717.5, 1307, 717.5, '#f000d8');
poly(rsi, '#ff6a20', 1);
poly(signal, '#2f6ff0', 1);

/* ---------- pane separators, axes ---------- */
line(185, 571.5, AXIS_RIGHT, 571.5, '#808080');
line(185, 614.5, AXIS_RIGHT, 614.5, '#808080');
line(185, 726.5, AXIS_RIGHT, 726.5, '#b8b8b8');
line(PLOT_RIGHT + .5, 75, PLOT_RIGHT + .5, 742, '#b8b8b8');

for (let p = 0; p <= 70000; p += 2000) {
  const y = Math.round(priceY(p)) + .5;
  if (y > 96) line(PLOT_RIGHT, y, PLOT_RIGHT + (p % 10000 ? 3 : 5), y, '#b0b0b0');
}
[630, 637, 645, 652, 659, 667, 675, 683, 691, 699, 707, 715].forEach((y) => line(PLOT_RIGHT, y + .5, PLOT_RIGHT + 3, y + .5, '#b0b0b0'));
line(PLOT_RIGHT, 601.5, PLOT_RIGHT + 5, 601.5, '#b0b0b0');

[[124, '60,000'], [193, '50,000'], [261, '40,000'], [330, '30,000'], [466, '10,000']].forEach(([y, s]) => text(1320, y, s));
text(1357, 396, '0', { end: true });
text(1357, 536, '0', { end: true });
text(1320, 604, '60,000K');
text(1320, 662, '75.00');
text(1320, 694, '50.00');
text(1320, 723, '25.00');
text(1313, 96, 'HC -55.19%', { fill: '#0000d8' });

// red price tag sits under the two green line labels
rect(1317, 341, 62, 28, '#ff0000');
text(1320, 351, '26,750', { fill: '#fff' });
text(1320, 367, '(+26.78%)', { fill: '#fff' });
rect(1306, 344, 3, 44, '#e00000');
rect(1306, 388, 3, 44, '#0000d8');
[[348, 13, '26,000'], [384, 15, '20,500']].forEach(([y, h, s]) => {
  out += `<rect x="1309.500" y="${y + .5}" width="41" height="${h}" fill="#e6fde0" stroke="#111"/>`;
  text(1312, y + h / 2 + 4.5, s);
});

box(1311, 75, 8, 8, 'L');
box(1319, 75, 8, 8, 'I');
box(1327, 75, 8, 8, 'R');
box(1371, 75, 8, 8, '□');
[572, 615].forEach((y) => {
  box(1311, y, 8, 8, 'L');
  box(1319, y, 8, 8, 'I');
  box(1362, y, 8, 8, '□');
  box(1370, y, 9, 8, '×');
});

[[187, '2022/01'], [539, '2023/01'], [914, '2024/01'], [1320, '01/06']].forEach(([x, s]) => text(x, 738, s));

svg.innerHTML = out;
```
